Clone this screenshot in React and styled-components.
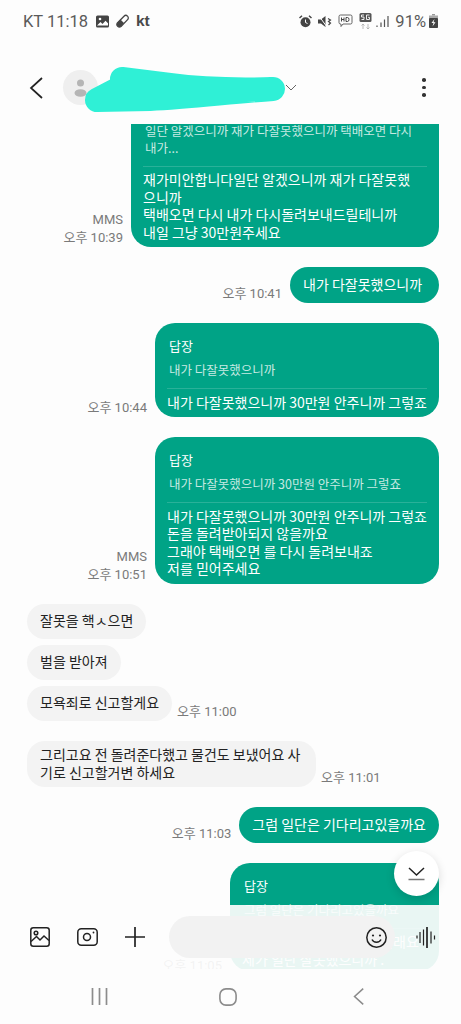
import React from "react";
import styled, { createGlobalStyle } from "styled-components";

const Global = createGlobalStyle`
  html, body { margin: 0; padding: 0; background: #fdfdfd; }
  * { box-sizing: border-box; }
`;
const FONT = `"Noto Sans CJK KR", "Noto Sans", sans-serif`;

const Screen = styled.div`
  position: relative; width: 461px; height: 1024px; overflow: hidden;
  display: flex; flex-direction: column; background: #fdfdfd; font-family: ${FONT};
`;
const StatusBar = styled.div`
  height: 44px; flex: none; display: flex; align-items: center; justify-content: space-between;
  padding: 0 23px 2px 23px; color: #5a5a5a; font: 400 16.5px Roboto, sans-serif;
`;
const StatusGroup = styled.div`
  display: flex; align-items: center; gap: ${p => p.$gap || 6}px;
`;
const KtMark = styled.span`
  font: 700 15.5px "Liberation Sans", sans-serif; color: #4a4a4a; letter-spacing: -0.3px;
`;
const Header = styled.div`
  height: 80px; flex: none; display: flex; align-items: center; padding: 7px 0 0 29px; position: relative;
`;
const Avatar = styled.div`
  width: 35px; height: 35px; border-radius: 50%; background: #efefef; margin-left: 20px;
  display: flex; align-items: center; justify-content: center; flex: none;
`;
const NameChevron = styled.div`
  margin-left: 187px; display: flex; flex: none;
`;
const Kebab = styled.div`
  margin-left: 125px; display: flex; flex-direction: column; gap: 4px; flex: none;
`;
const Dot = styled.span`
  width: 3.6px; height: 3.6px; border-radius: 50%; background: #333;
`;
const Scribble = styled.svg`
  position: absolute; left: 80px; top: 18px;
`;
const Messages = styled.div`
  flex: 1; overflow: hidden; padding: 0 22px 0 27px;
`;
const Feed = styled.div`
  margin-top: -40.5px; display: flex; flex-direction: column;
`;
const Row = styled.div`
  display: flex; align-items: flex-end; gap: ${p => p.$in ? 5 : 8}px;
  justify-content: ${p => p.$in ? "flex-start" : "flex-end"};
  margin-top: ${p => p.$top ?? 20}px;
`;
const Meta = styled.div`
  font-size: 13px; line-height: 18px; color: #7a7a7a; text-align: right; flex: none;
  white-space: pre-line; font-family: Roboto, ${FONT}; margin-bottom: ${p => p.$drop || 0}px;
`;
const Bubble = styled.div`
  font-size: 14px; line-height: 17.5px; white-space: pre-line;
  border-radius: 18px; padding: 0 13px; display: flex; align-items: center;
  height: ${p => p.$h || 36}px; ${p => p.$w ? `width: ${p.$w}px;` : ""}
  background: ${p => p.$in ? "#f3f3f3" : "#00a386"};
  color: ${p => p.$in ? "#222" : "#fff"};
`;
const ReplyBubble = styled.div`
  width: ${p => p.$w}px; border-radius: 20px; background: #00a386; color: #fff; flex: none;
  padding: 14px 12px ${p => p.$pb ?? 6}px; font-size: 14px; line-height: 17.5px; white-space: pre-line;
`;
const ReplyLabel = styled.div`
  font-size: 13px; line-height: 18px; padding-left: 2px;
`;
const ReplyQuote = styled.div`
  font-size: 12.5px; line-height: 17px; padding: 6px 0 10px 2px; color: rgba(255,255,255,.78);
  border-bottom: 1px solid rgba(255,255,255,.16); margin-bottom: 4.5px; white-space: pre-line;
`;
const Composer = styled.div`
  position: absolute; left: 0; right: 0; bottom: 0; height: 119px;
  background: rgba(253,253,253,.92);
  display: flex; flex-direction: column;
`;
const InputRow = styled.div`
  height: 64px; flex: none; display: flex; align-items: center; padding: 0 0 0 30px;
`;
const ToolIcon = styled.button`
  all: unset; display: flex; flex: none; margin-right: ${p => p.$mr}px;
`;
const InputPill = styled.div`
  width: 226px; height: 42px; border-radius: 21px; background: #f2f2f2; flex: none;
  display: flex; align-items: center; justify-content: flex-end; padding-right: 8px; margin-right: 21px;
`;
const NavBar = styled.div`
  flex: 1; display: flex; align-items: center; padding: 0 0 0 91px; background: #fdfdfd;
`;
const NavSlot = styled.div`
  display: flex; flex: none; margin-right: ${p => p.$mr || 0}px;
`;
const ScrollDown = styled.button`
  all: unset; position: absolute; left: 394px; top: 851px; width: 45px; height: 45px; border-radius: 50%;
  background: #fff; box-shadow: 0 3px 10px rgba(0,0,0,.14); display: flex; align-items: center; justify-content: center;
`;

const ImgIcon = () => (
  <svg width="13" height="13" viewBox="0 0 13 13"><rect width="13" height="12" y=".5" rx="1.5" fill="#444"/><circle cx="4" cy="4" r="1.3" fill="#fff"/><path d="M1 10.5 4.5 7l2 2 3-3.2 2.5 2.5v2.2z" fill="#fff"/></svg>
);
const PillIcon = () => (
  <svg width="15" height="15" viewBox="0 0 15 15"><path d="M9 2.2a2.4 2.4 0 0 1 3.6 3.4L6 12.4A2.5 2.5 0 0 1 2.4 9z" fill="none" stroke="#444" strokeWidth="1.3"/><path d="M5.5 5.6 9 9l-3 3.4A2.5 2.5 0 0 1 2.4 9z" fill="#444"/></svg>
);
const AlarmIcon = () => (
  <svg width="13" height="13" viewBox="0 0 13 13"><circle cx="6.5" cy="7.3" r="5" fill="#444"/><path d="M6.5 4.5v3l2 1" stroke="#fff" fill="none"/><path d="M.5 3 3 .8M12.5 3 10 .8" stroke="#444" strokeWidth="1.5"/></svg>
);
const MuteIcon = () => (
  <svg width="14" height="13" viewBox="0 0 14 13"><path d="M0 4.5h3L7.5 1v11L3 8.5H0z" fill="#444"/><path d="M1 1l8 11" stroke="#fdfdfd" strokeWidth="1"/><path d="M10 3.5l2.5 1.5-2 1.5 2 1.5-2 2" fill="none" stroke="#444" strokeWidth="1.2"/></svg>
);
const HdIcon = () => (
  <svg width="15" height="14" viewBox="0 0 15 14"><path d="M2.5 1h10A1.5 1.5 0 0 1 14 2.5v6a1.5 1.5 0 0 1-1.5 1.5H5L3 12.5V10h-.5A1.5 1.5 0 0 1 1 8.5v-6A1.5 1.5 0 0 1 2.5 1z" fill="none" stroke="#555" strokeWidth=".9"/><path d="M3.5 3.5v4M6 3.5v4M3.5 5.5H6M8 3.5v4h1.5a1.5 2 0 0 0 0-4z" fill="none" stroke="#444" strokeWidth="1"/></svg>
);
const FiveGIcon = () => (
  <svg width="13" height="16" viewBox="0 0 13 16"><rect width="12" height="9" x=".5" rx="1.5" fill="#555"/><path d="M5 2H2.5v2H5v2.500H2.500M10.500 2H7.500v4.500h3V4.300H9" fill="none" stroke="#fff" strokeWidth=".9"/><path d="M4 16v-5M2.500 12.500 4 11l1.500 1.500M9 11v5M7.500 14.500 9 16l1.500-1.500" fill="none" stroke="#aaa" strokeWidth=".8"/></svg>
);
const SignalIcon = () => (
  <svg width="13" height="12" viewBox="0 0 13 12"><path d="M1 10.500V12M5 7.500V12M8.500 4.500V12M12 1v11" fill="none" stroke="#555" strokeWidth="1.200"/></svg>
);
const BatteryIcon = () => (
  <svg width="9" height="14" viewBox="0 0 9 14"><path d="M3 0h3v1.500H3z" fill="#999"/><rect y="1.500" width="9" height="3" fill="#aaa"/><rect y="4" width="9" height="10" rx=".8" fill="#444"/><path d="M5.500 5 2.500 9h2l-1 3.500 3-4.300h-2z" fill="#fff"/></svg>
);
const LargeChevronLeft = ({ w = 14, h = 22, c = "#222", sw = 1.7 }) => (
  <svg width={w} height={h} viewBox="0 0 14 22"><path d="M13 1 2 11l11 10" fill="none" stroke={c} strokeWidth={sw}/></svg>
);
const PersonIcon = () => (
  <svg width="13" height="18" viewBox="0 0 13 18"><circle cx="6.500" cy="4" r="3.500" fill="#b5b5b5"/><ellipse cx="6.500" cy="14" rx="6" ry="3.800" fill="#b5b5b5"/></svg>
);
const GalleryIcon = () => (
  <svg width="20" height="20" viewBox="0 0 20 20" fill="none" stroke="#222" strokeWidth="1.500"><rect x=".8" y=".8" width="18.400" height="18.400" rx="2.500"/><circle cx="6" cy="6" r="1.800"/><path d="M1 14.500 6.500 9.500l3.500 3.500 4-4 5 4.500"/></svg>
);
const CameraIcon = () => (
  <svg width="21" height="18" viewBox="0 0 21 18" fill="none" stroke="#222" strokeWidth="1.500"><rect x=".8" y=".8" width="19.400" height="16.400" rx="3.500"/><circle cx="10" cy="9" r="3.500"/><circle cx="16.500" cy="4.500" r=".9" fill="#222" stroke="none"/></svg>
);
const PlusIcon = () => (
  <svg width="20" height="20" viewBox="0 0 20 20"><path d="M10 0v20M0 10h20" stroke="#222" strokeWidth="1.700"/></svg>
);
const SmileIcon = () => (
  <svg width="21" height="21" viewBox="0 0 21 21" fill="none" stroke="#222" strokeWidth="1.500"><circle cx="10.500" cy="10.500" r="9.700"/><circle cx="7" cy="8.500" r="1.100" fill="#222" stroke="none"/><circle cx="14" cy="8.500" r="1.100" fill="#222" stroke="none"/><path d="M6 12.500c1.500 3.500 7.500 3.500 9 0"/></svg>
);
const WaveIcon = () => (
  <svg width="21" height="21" viewBox="0 0 21 21" fill="none" stroke="#222" strokeWidth="1.200"><path d="M1 8.500v3M4 5v11M7.500 2.500v16" /><path d="M11 0v21" strokeWidth="1.700"/><path d="M15 4.500v12M18.500 8.500v4"/></svg>
);
const DownIcon = () => (
  <svg width="17" height="14" viewBox="0 0 17 14" fill="none"><path d="M1 1l7.500 7L16 1" stroke="#222" strokeWidth="1.500"/><path d="M.5 12.500h16" stroke="#777" strokeWidth="1.500"/></svg>
);
const Lines = () => (
  <svg width="17" height="18" viewBox="0 0 17 18"><path d="M1.500 0v17M8.500 0v17M15.500 0v17" stroke="#8c8c8c" strokeWidth="1.700"/></svg>
);
const HomeIcon = () => (
  <svg width="18" height="18" viewBox="0 0 18 18"><rect x=".9" y=".9" width="16.200" height="16.200" rx="6" fill="none" stroke="#8c8c8c" strokeWidth="1.600"/></svg>
);

const ReplyMsg = ({ meta, w, quote, body, pb, drop, top }) => (
  <Row $top={top}>
    <Meta $drop={drop}>{meta}</Meta>
    <ReplyBubble $w={w} $pb={pb}>
      <ReplyLabel>답장</ReplyLabel>
      <ReplyQuote>{quote}</ReplyQuote>
      {body}
    </ReplyBubble>
  </Row>
);

export default function App() {
  return (
    <Screen>
      <Global />
      <StatusBar>
        <StatusGroup $gap={8}>
          <span>KT 11:18</span>
          <StatusGroup $gap={6}><ImgIcon /><PillIcon /><KtMark>kt</KtMark></StatusGroup>
        </StatusGroup>
        <StatusGroup $gap={6}>
          <AlarmIcon /><MuteIcon /><HdIcon />
          <StatusGroup $gap={4}><FiveGIcon /><SignalIcon /></StatusGroup>
          <StatusGroup $gap={3}><span>91%</span><BatteryIcon /></StatusGroup>
        </StatusGroup>
      </StatusBar>
      <Header>
        <LargeChevronLeft />
        <Avatar><PersonIcon /></Avatar>
        <NameChevron>
          <svg width="12" height="7" viewBox="0 0 12 7"><path d="M1 1l5 5 5-5" fill="none" stroke="#666" strokeWidth="1"/></svg>
        </NameChevron>
        <Kebab><Dot /><Dot /><Dot /></Kebab>
        <Scribble width="210" height="60" viewBox="0 0 210 60">
          <path d="M42 17 90 23C120 27 160 28 193 27 150 30 110 35 70 37L17 38 42 25Z" fill="#2ff0d6" stroke="#2ff0d6" strokeWidth="24" strokeLinecap="round" strokeLinejoin="round"/>
        </Scribble>
      </Header>
      <Messages>
        <Feed>
          <ReplyMsg top={0} meta={"MMS\n오후 10:39"} w={308}
            quote={"일단 알겠으니까 재가 다잘못했으니까 택배오면 다시\n내가..."}
            body={"재가미안합니다일단 알겠으니까 재가 다잘못했\n으니까\n택배오면 다시 내가 다시돌려보내드릴테니까\n내일 그냥 30만원주세요"} />
          <Row>
            <Meta>오후 10:41</Meta>
            <Bubble $w={149}>내가 다잘못했으니까</Bubble>
          </Row>
          <ReplyMsg meta="오후 10:44" w={284} quote="내가 다잘못했으니까" body="내가 다잘못했으니까 30만원 안주니까 그렇죠" />
          <ReplyMsg meta={"MMS\n오후 10:51"} w={284} quote="내가 다잘못했으니까 30만원 안주니까 그렇죠"
            body={"내가 다잘못했으니까 30만원 안주니까 그렇죠\n돈을 돌려받아되지 않을까요\n그래야 택배오면 를 다시 돌려보내죠\n저를 믿어주세요"} />
          <Row $in>
            <Bubble $in $h={35}>잘못을 핵ㅅ으면</Bubble>
          </Row>
          <Row $in $top={6}>
            <Bubble $in $h={35}>벌을 받아져</Bubble>
          </Row>
          <Row $in $top={6}>
            <Bubble $in $h={35}>모욕죄로 신고할게요</Bubble>
            <Meta>오후 11:00</Meta>
          </Row>
          <Row $in>
            <Bubble $in $h={46} $w={289}>{"그리고요 전 돌려준다했고 물건도 보냈어요 사\n기로 신고할거변 하세요"}</Bubble>
            <Meta>오후 11:01</Meta>
          </Row>
          <Row>
            <Meta>오후 11:03</Meta>
            <Bubble>그럼 일단은 기다리고있을까요</Bubble>
          </Row>
          <ReplyMsg meta="오후 11:05" w={209} pb={3} drop={-4} quote="그럼 일단은 기다리고있을까요"
            body={"그럼 일단은 기다리고 있을래요\n제가 일단 잘못했으니까 ."} />
        </Feed>
      </Messages>
      <Composer>
        <InputRow>
          <ToolIcon $mr={27}><GalleryIcon /></ToolIcon>
          <ToolIcon $mr={27}><CameraIcon /></ToolIcon>
          <ToolIcon $mr={24}><PlusIcon /></ToolIcon>
          <InputPill><SmileIcon /></InputPill>
          <WaveIcon />
        </InputRow>
        <NavBar>
          <NavSlot $mr={111}><Lines /></NavSlot>
          <NavSlot $mr={116}><HomeIcon /></NavSlot>
          <NavSlot><LargeChevronLeft w={11} h={19} c="#8c8c8c" sw={2} /></NavSlot>
        </NavBar>
      </Composer>
      <ScrollDown><DownIcon /></ScrollDown>
    </Screen>
  );
}
